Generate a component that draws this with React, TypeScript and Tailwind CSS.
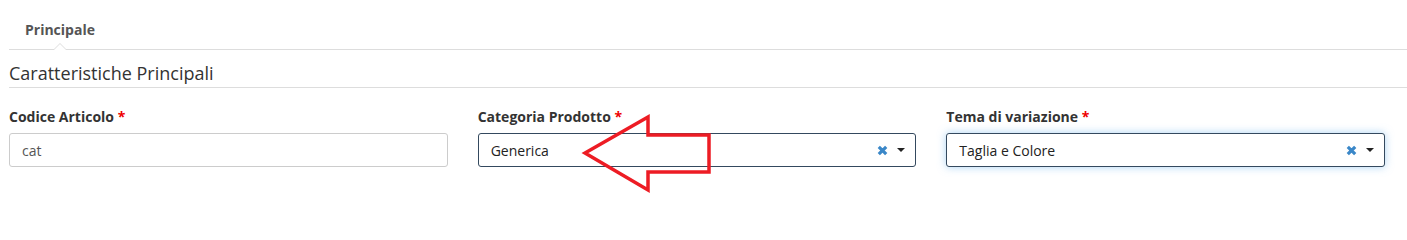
import { ReactNode } from "react"

// piccola x blu per cancellare la selezione
function ClearIcon() {
  return (
    <svg width="11" height="11" viewBox="0 0 11 11" className="block">
      <path d="M1.8 1.8 L9.2 9.2 M9.2 1.8 L1.8 9.2" stroke="#3a87c8" strokeWidth="3.2" strokeLinecap="butt" />
    </svg>
  )
}

function CaretDown() {
  return (
    <svg width="8" height="4" viewBox="0 0 8 4" className="block">
      <path d="M0 0 H8 L4 4 Z" fill="#222" />
    </svg>
  )
}

function Field({ label, children }: { label: string; children: ReactNode }) {
  return (
    <div className="flex flex-col">
      <label className="text-[14px] leading-[18px] font-bold text-[#333]">
        {label} <span className="text-[#e00]">*</span>
      </label>
      <div className="mt-[7px]">{children}</div>
    </div>
  )
}

function Select({ value, focused }: { value: string; focused?: boolean }) {
  return (
    <div
      className={`flex h-[34px] items-center rounded-[3px] border border-[#34495e] bg-white pl-3 pr-[10px] ${
        focused ? "shadow-[0_0_8px_rgba(102,175,233,0.55)]" : ""
      }`}
    >
      <span className="flex-1 text-[14px] text-[#222]">{value}</span>
      <span className="mr-[9px]">
        <ClearIcon />
      </span>
      <CaretDown />
    </div>
  )
}

export default function App() {
  return (
    <div
      className="relative h-[218px] w-full bg-white pt-[11px] pl-[9px]"
      style={{ fontFamily: '"Open Sans", "Noto Sans", sans-serif' }}
    >
      {/* Tabs */}
      <div className="border-b border-[#ddd]">
        <div className="relative inline-block px-4 py-[10px] text-[14px] leading-[18px] font-bold text-[#555]">
          Principale
          <span className="absolute bottom-[-1px] left-1/2 h-0 w-0 -translate-x-1/2 border-x-[7px] border-b-[7px] border-x-transparent border-b-[#ddd]" />
          <span className="absolute bottom-[-1px] left-1/2 h-0 w-0 -translate-x-1/2 border-x-[6px] border-b-[6px] border-x-transparent border-b-white" />
        </div>
      </div>

      {/* Sezione */}
      <h3 className="mt-[11px] border-b border-[#ddd] pb-[2px] text-[18px] leading-[24px] font-normal text-[#333]">
        Caratteristiche Principali
      </h3>

      <div className="mt-[20px] grid grid-cols-3 gap-[30px] pr-[22px]">
        <Field label="Codice Articolo">
          <div className="flex h-[34px] items-center rounded-[3px] border border-[#ccc] bg-white px-3 text-[14px] text-[#555]">
            cat
          </div>
        </Field>
        <Field label="Categoria Prodotto">
          <Select value="Generica" />
        </Field>
        <Field label="Tema di variazione">
          <Select value="Taglia e Colore" focused />
        </Field>
      </div>

      {/* freccia di annotazione */}
      <svg className="pointer-events-none absolute left-0 top-0" width="1407" height="218">
        <path
          d="M585 153 L648 117 L648 135 L709 135 L709 172 L648 172 L648 190 Z"
          fill="none"
          stroke="#ed1c24"
          strokeWidth="3.5"
          strokeLinejoin="miter"
        />
      </svg>
    </div>
  )
}
